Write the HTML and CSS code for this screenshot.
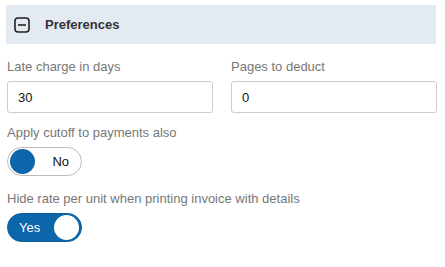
FILE: index.html
```html
<!DOCTYPE html>
<html lang="en">
<head>
    <meta charset="UTF-8">
    <title>Preferences</title>
    <link rel="stylesheet" href="styles.css">
</head>
<body>
    <div class="panel">
        <div class="panel-header">
            <svg class="collapse-icon" width="16" height="16" viewBox="0 0 16 16">
                <rect x="1" y="1" width="14" height="14" rx="3" fill="none" stroke="#222" stroke-width="1.6"/>
                <line x1="4" y1="8" x2="12" y2="8" stroke="#222" stroke-width="1.6"/>
            </svg>
            <span class="panel-title">Preferences</span>
        </div>

        <div class="row">
            <div class="field">
                <label for="lateCharge">Late charge in days</label>
                <input type="text" id="lateCharge" value="30">
            </div>
            <div class="field">
                <label for="pagesDeduct">Pages to deduct</label>
                <input type="text" id="pagesDeduct" value="0">
            </div>
        </div>

        <div class="field">
            <label>Apply cutoff to payments also</label>
            <div class="toggle off">
                <span class="knob"></span>
                <span class="toggle-text">No</span>
            </div>
        </div>

        <div class="field">
            <label>Hide rate per unit when printing invoice with details</label>
            <div class="toggle on">
                <span class="toggle-text">Yes</span>
                <span class="knob"></span>
            </div>
        </div>
    </div>
</body>
</html>
```

FILE: styles.css
```css
body {
    margin: 0;
    font-family: 'Liberation Sans', Arial, sans-serif;
    background-color: #fff;
}

.panel {
    padding: 5px 8px 0 7px;
}

.panel-header {
    display: flex;
    align-items: center;
    height: 39px;
    margin-left: -1px;
    padding-left: 8px;
    background-color: #e4eaf1;
    border-right: 1px solid #fff;
}

.collapse-icon {
    display: block;
    margin-right: 15px;
}

.panel-title {
    font-size: 13px;
    font-weight: bold;
    color: #333;
}

.row {
    display: flex;
    gap: 18px;
}

.row .field {
    flex: 1;
}

.field {
    margin-top: 15px;
}

.row + .field {
    margin-top: 12px;
}

label {
    display: block;
    font-size: 13px;
    color: #777;
    margin-bottom: 7px;
}

input {
    width: 100%;
    height: 32px;
    padding: 0 10px;
    box-sizing: border-box;
    border: 1px solid #ccc;
    border-radius: 3px;
    font-family: 'Liberation Sans', Arial, sans-serif;
    font-size: 13px;
    color: #111;
}

.toggle {
    display: flex;
    align-items: center;
    justify-content: space-between;
    width: 75px;
    height: 29px;
    box-sizing: border-box;
    border-radius: 15px;
    padding: 0 2px;
    font-size: 13px;
}

.toggle.off {
    border: 1px solid #bbb;
    background-color: #fff;
}

.toggle.on {
    border: 1px solid #0b5f9c;
    background-color: #0c66a9;
}

.knob {
    width: 25px;
    height: 25px;
    border-radius: 50%;
}

.off .knob {
    background-color: #0c66a9;
}

.on .knob {
    background-color: #fff;
}

.off .toggle-text {
    color: #111;
    margin-right: 10px;
}

.on .toggle-text {
    color: #fff;
    margin-left: 9px;
}
```
